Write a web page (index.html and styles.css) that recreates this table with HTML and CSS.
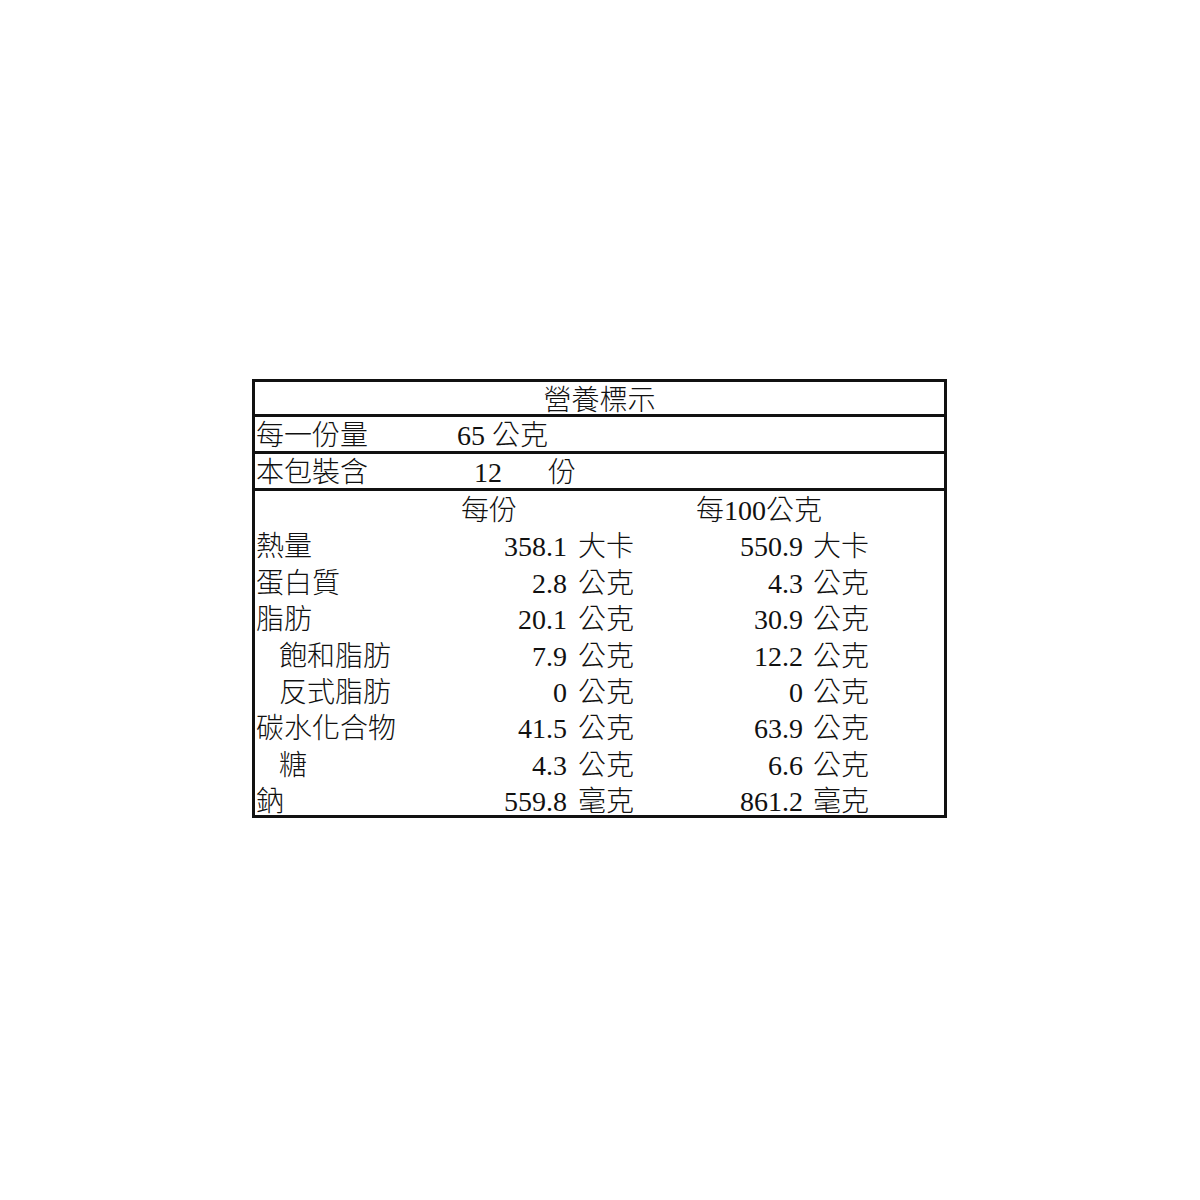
FILE: index.html
```html
<!DOCTYPE html>
<html lang="zh-Hant">
<head>
<meta charset="utf-8">
<title>營養標示</title>
<link rel="stylesheet" href="styles.css">
</head>
<body>
<div class="label">
  <div class="row title">營養標示</div>
  <div class="row info">
    <span class="info-key">每一份量</span>
    <span class="info-val">65 公克</span>
  </div>
  <div class="row info">
    <span class="info-key">本包裝含</span>
    <span class="info-val"><span class="count">12</span><span class="count-unit">份</span></span>
  </div>
  <div class="facts">
    <div class="head"></div>
    <div class="head head-per">每份</div>
    <div class="head head-100">每100公克</div>
    <div class="blank"></div>

    <div class="name">熱量</div><div class="num">358.1</div><div></div><div class="unit">大卡</div><div class="num">550.9</div><div></div><div class="unit">大卡</div><div></div>
    <div class="name">蛋白質</div><div class="num">2.8</div><div></div><div class="unit">公克</div><div class="num">4.3</div><div></div><div class="unit">公克</div><div></div>
    <div class="name">脂肪</div><div class="num">20.1</div><div></div><div class="unit">公克</div><div class="num">30.9</div><div></div><div class="unit">公克</div><div></div>
    <div class="name sub">飽和脂肪</div><div class="num">7.9</div><div></div><div class="unit">公克</div><div class="num">12.2</div><div></div><div class="unit">公克</div><div></div>
    <div class="name sub">反式脂肪</div><div class="num">0</div><div></div><div class="unit">公克</div><div class="num">0</div><div></div><div class="unit">公克</div><div></div>
    <div class="name">碳水化合物</div><div class="num">41.5</div><div></div><div class="unit">公克</div><div class="num">63.9</div><div></div><div class="unit">公克</div><div></div>
    <div class="name sub">糖</div><div class="num">4.3</div><div></div><div class="unit">公克</div><div class="num">6.6</div><div></div><div class="unit">公克</div><div></div>
    <div class="name">鈉</div><div class="num">559.8</div><div></div><div class="unit">毫克</div><div class="num">861.2</div><div></div><div class="unit">毫克</div><div></div>
  </div>
</div>
</body>
</html>
```

FILE: styles.css
```css
html, body {
  margin: 0;
  padding: 0;
  background: #ffffff;
}

body {
  font-family: "Liberation Serif", "Noto Sans CJK TC", serif;
  font-size: 28px;
  font-weight: 300;
  color: #111111;
}

.label {
  box-sizing: border-box;
  width: 695px;
  margin: 379px 0 0 252px;
  border: 3px solid #111;
}

.row {
  box-sizing: border-box;
  border-bottom: 3px solid #111;
  white-space: nowrap;
}

.title {
  height: 35px;
  padding-top: 3px;
  line-height: 32px;
  text-align: center;
}

.info {
  display: grid;
  grid-template-columns: 202px 1fr;
  height: 37px;
  padding-top: 2px;
  line-height: 34px;
}

.info-key {
  padding-left: 1px;
}

.count {
  display: inline-block;
  margin-left: 17px;
  width: 74px;
}

.facts {
  box-sizing: border-box;
  display: grid;
  grid-template-columns: 182px 130px 11px 56px 169px 10px 56px 1fr;
  grid-auto-rows: 36.4px;
  line-height: 36px;
  height: 324px;
  padding-top: 2px;
  white-space: nowrap;
}

.head-per {
  grid-column: 2 / 5;
  padding-left: 24px;
}

.head-100 {
  grid-column: 5 / 8;
  padding-left: 62px;
}

.name {
  padding-left: 1px;
}

.name.sub {
  padding-left: 24px;
}

.num {
  text-align: right;
}

.unit {
  text-align: left;
}
```
